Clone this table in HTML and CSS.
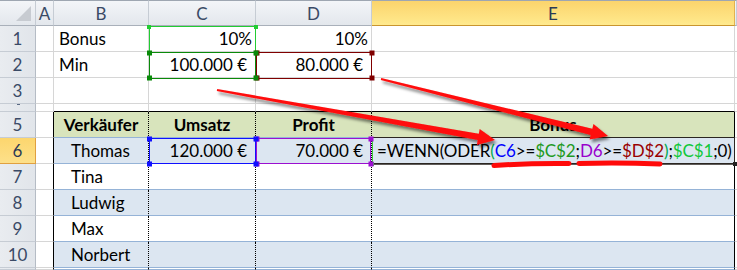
FILE: index.html
```html
<!DOCTYPE html>
<html>
<head>
<meta charset="utf-8">
<link rel="stylesheet" href="styles.css">
</head>
<body>
<div class="sheet">
  <!-- column headers -->
  <div class="c h corner"><span class="tri"></span></div>
  <div class="c h">A</div>
  <div class="c h">B</div>
  <div class="c h">C</div>
  <div class="c h">D</div>
  <div class="c h hsel-col">E</div>
  <div class="c h"></div>

  <!-- row 1 -->
  <div class="c rh">1</div>
  <div class="c"></div>
  <div class="c">Bonus</div>
  <div class="c num pct">10%</div>
  <div class="c num pct">10%</div>
  <div class="c"></div>
  <div class="c"></div>

  <!-- row 2 -->
  <div class="c rh">2</div>
  <div class="c"></div>
  <div class="c">Min</div>
  <div class="c num">100.000 €</div>
  <div class="c num">80.000 €</div>
  <div class="c"></div>
  <div class="c"></div>

  <!-- row 3 -->
  <div class="c rh">3</div>
  <div class="c"></div>
  <div class="c"></div>
  <div class="c"></div>
  <div class="c"></div>
  <div class="c"></div>
  <div class="c"></div>

  <!-- row 4 (collapsed) -->
  <div class="c rh r4"><span class="tick"></span></div>
  <div class="c tl-edge"></div>
  <div class="c ttop"></div>
  <div class="c ttop"></div>
  <div class="c ttop"></div>
  <div class="c ttop"></div>
  <div class="c"></div>

  <!-- row 5 -->
  <div class="c rh">5</div>
  <div class="c ledge"></div>
  <div class="c t th">Verkäufer</div>
  <div class="c t th">Umsatz</div>
  <div class="c t th">Profit</div>
  <div class="c t th tlast">Bonus</div>
  <div class="c"></div>

  <!-- row 6 -->
  <div class="c rh hsel-row">6</div>
  <div class="c ledge"></div>
  <div class="c t band name">Thomas</div>
  <div class="c t band num">120.000 €</div>
  <div class="c t band num">70.000 €</div>
  <div class="c t band tlast formula">=WENN(ODER<span class="par">(</span><span class="f-c6">C6</span>&gt;=<span class="f-c2">$C$2</span>;<span class="f-d6">D6</span>&gt;=<span class="f-d2">$D$2</span><span class="par">)</span>;<span class="f-c1">$C$1</span>;0)</div>
  <div class="c"></div>

  <!-- row 7 -->
  <div class="c rh">7</div>
  <div class="c ledge"></div>
  <div class="c t name">Tina</div>
  <div class="c t"></div>
  <div class="c t"></div>
  <div class="c t tlast"></div>
  <div class="c"></div>

  <!-- row 8 -->
  <div class="c rh">8</div>
  <div class="c ledge"></div>
  <div class="c t band name">Ludwig</div>
  <div class="c t band"></div>
  <div class="c t band"></div>
  <div class="c t band tlast"></div>
  <div class="c"></div>

  <!-- row 9 -->
  <div class="c rh">9</div>
  <div class="c ledge"></div>
  <div class="c t name">Max</div>
  <div class="c t"></div>
  <div class="c t"></div>
  <div class="c t tlast"></div>
  <div class="c"></div>

  <!-- row 10 -->
  <div class="c rh">10</div>
  <div class="c ledge"></div>
  <div class="c t band name">Norbert</div>
  <div class="c t band"></div>
  <div class="c t band"></div>
  <div class="c t band tlast"></div>
  <div class="c"></div>

  <!-- row 11 (partial) -->
  <div class="c rh"></div>
  <div class="c ledge"></div>
  <div class="c t"></div>
  <div class="c t"></div>
  <div class="c t"></div>
  <div class="c t tlast"></div>
  <div class="c"></div>

  <svg class="overlay" width="737" height="270" viewBox="0 0 737 270">
    <defs>
      <filter id="sh" x="-10%" y="-60%" width="120%" height="220%">
        <feDropShadow dx="2" dy="3" stdDeviation="1.6" flood-color="#000" flood-opacity="0.5"/>
      </filter>
    </defs>

    <!-- active cell E6 -->
    <rect x="372.5" y="137.5" width="362" height="26" fill="none" stroke="#2b2622" stroke-width="1"/>
    <line x1="372" y1="164" x2="735" y2="164" stroke="#2b2622" stroke-width="1.5"/>
    <rect x="733" y="162" width="4" height="4" fill="#222"/>
    <line x1="372.5" y1="138" x2="372.5" y2="164" stroke="#3ed13e" stroke-width="1"/>
    <rect x="371" y="162" width="3" height="4" fill="#3ed13e"/>

    <!-- C1 reference (light green) -->
    <rect x="149.5" y="26.5" width="106" height="26" fill="none" stroke="#22cc33" stroke-width="1"/>
    <rect x="147" y="25" width="4" height="4" fill="#22cc33"/>
    <rect x="254" y="25" width="4" height="4" fill="#22cc33"/>

    <!-- D2 reference (dark red) -->
    <rect x="256.5" y="52.5" width="115" height="26" fill="none" stroke="#800000" stroke-width="1"/>
    <rect x="254.5" y="50.5" width="5" height="5" fill="#800000"/>
    <rect x="369.5" y="50.5" width="5" height="5" fill="#800000"/>
    <rect x="369.5" y="75.5" width="5" height="5" fill="#800000"/>
    <rect x="254.5" y="75.5" width="5" height="5" fill="#800000"/>

    <!-- C2 reference (dark green) -->
    <rect x="149.5" y="52.5" width="106" height="26" fill="none" stroke="#0a8a0a" stroke-width="1"/>
    <rect x="147" y="50.5" width="5" height="5" fill="#0a8a0a"/>
    <rect x="253.5" y="50.5" width="5" height="5" fill="#0a8a0a"/>
    <rect x="253.5" y="75.5" width="5" height="5" fill="#0a8a0a"/>
    <rect x="147" y="75.5" width="5" height="5" fill="#0a8a0a"/>

    <!-- D6 reference (purple) -->
    <rect x="256.5" y="138.5" width="114" height="25" fill="none" stroke="#9b10d0" stroke-width="1"/>
    <rect x="254.5" y="136.5" width="5" height="5" fill="#9b10d0"/>
    <rect x="368.5" y="136.5" width="5" height="5" fill="#9b10d0"/>
    <rect x="368.5" y="161.5" width="5" height="5" fill="#9b10d0"/>
    <rect x="254.5" y="161.5" width="5" height="5" fill="#9b10d0"/>

    <!-- C6 reference (blue) -->
    <rect x="149.5" y="138.5" width="106" height="25" fill="none" stroke="#1010ff" stroke-width="1"/>
    <rect x="147" y="136.5" width="5" height="5" fill="#1010ff"/>
    <rect x="253.5" y="136.5" width="5" height="5" fill="#1010ff"/>
    <rect x="253.5" y="161.5" width="5" height="5" fill="#1010ff"/>
    <rect x="147" y="161.5" width="5" height="5" fill="#1010ff"/>

    <!-- arrows -->
    <polygon filter="url(#sh)" fill="#ff0a0a"
      points="217.2,89.0 478.8,133.8 479.7,129.1 495,140 476.9,144.9 477.7,140.1 216.8,91.0"/>
    <polygon filter="url(#sh)" fill="#ff0a0a"
      points="381.2,78.0 592.3,128.8 593.5,124.1 608,136 589.6,139.6 590.7,135.0 380.8,80.0"/>

    <!-- underlines -->
    <path d="M494 165.5 Q530 163 569 163.5" fill="none" stroke="#ff0a0a" stroke-width="5" stroke-linecap="round"/>
    <path d="M579 163.5 Q620 162.5 660 164" fill="none" stroke="#ff0a0a" stroke-width="5" stroke-linecap="round"/>
  </svg>
</div>
</body>
</html>
```
FILE: styles.css
```css
html, body {
  margin: 0;
  padding: 0;
  background: #ffffff;
}

.sheet {
  position: relative;
  display: grid;
  grid-template-columns: 36px 18px 95px 107px 116px 363px 2px;
  grid-template-rows: 26px 26px 26px 26px 8px 26px 26px 26px 26px 26px 26px 2px;
  width: 737px;
  height: 270px;
  overflow: hidden;
  font-family: Lato, "Open Sans", sans-serif;
  font-size: 17px;
  color: #000;
}

.c {
  box-sizing: border-box;
  display: flex;
  align-items: center;
  padding: 0 5px;
  border-right: 1px solid #d6d6d6;
  border-bottom: 1px solid #d6d6d6;
  white-space: nowrap;
  overflow: hidden;
  min-width: 0;
}

/* headers */
.h {
  justify-content: center;
  padding: 0;
  background: linear-gradient(#f3f5f8, #e3e7ec);
  border-top: 1px solid #9ea6b1;
  border-right: 1px solid #c6ccd4;
  border-bottom: 1px solid #a9b0ba;
  color: #3a4a66;
}

.corner {
  position: relative;
}

.tri {
  position: absolute;
  right: 4px;
  bottom: 4px;
  width: 0;
  height: 0;
  border-left: 15px solid transparent;
  border-bottom: 15px solid #c7cbd1;
}

.hsel-col {
  background: linear-gradient(#fbd46c, #ffea8e);
  border-bottom: 1px solid #c9952f;
  border-right: 1px solid #e3b24e;
  color: #2c3a55;
}

.rh {
  justify-content: center;
  padding: 0;
  background: linear-gradient(90deg, #e9ecf0, #e1e5ea);
  border-right: 1px solid #b5bcc5;
  border-bottom: 1px solid #c6ccd4;
  color: #3a4a66;
}

.hsel-row {
  background: linear-gradient(#fcd66e, #fde08a);
  border-right: 1px solid #e0a040;
  border-bottom: 1px solid #e0a040;
  color: #2c3a55;
}

.r4 {
  position: relative;
}

.tick {
  position: absolute;
  left: 17px;
  top: 0;
  width: 3px;
  height: 1px;
  background: #5a6a84;
}

/* values */
.num {
  justify-content: flex-end;
  padding-right: 8px;
}

.pct {
  padding-right: 3px;
}

/* table */
.ttop {
  border-bottom: 1px solid #000;
}

.tl-edge {
  border-right: 1px solid #d6d6d6;
}

.ledge {
  border-right: 1px solid #000;
}

.t {
  border-right: 1px dotted #000;
  border-bottom: 1px solid #95b3d7;
  background: #ffffff;
}

.tlast {
  border-right: 1px solid #000;
}

.th {
  justify-content: center;
  font-weight: bold;
  background: #d8e4bc;
  border-bottom: 1px solid #95b3d7;
}

.band {
  background: #dce6f1;
}

.name {
  padding-left: 17px;
}

.formula {
  padding-left: 5px;
  letter-spacing: -0.12px;
}

.par { color: #00a650; }
.f-c6 { color: #0000ff; }
.f-c2 { color: #1f9a1f; }
.f-d6 { color: #9900cc; }
.f-d2 { color: #990000; }
.f-c1 { color: #11c83a; }

.overlay {
  position: absolute;
  left: 0;
  top: 0;
  pointer-events: none;
}
```
